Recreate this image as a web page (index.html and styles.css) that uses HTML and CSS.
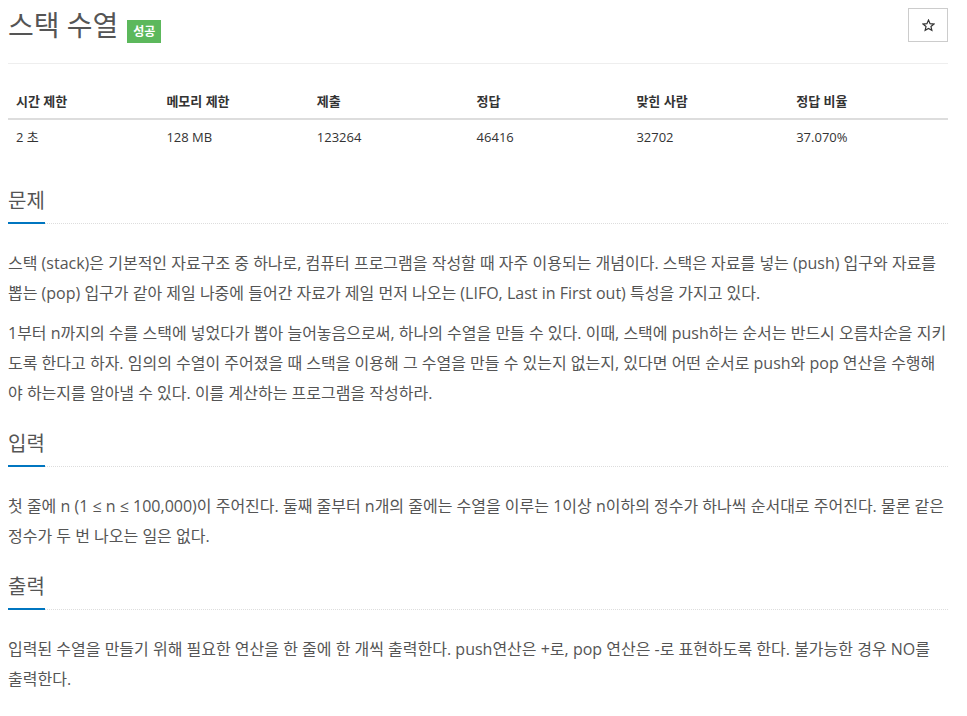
FILE: index.html
```html
<!DOCTYPE html>
<html lang="ko">
<head>
<meta charset="utf-8">
<title>스택 수열</title>
<link rel="stylesheet" href="styles.css">
</head>
<body>
<div class="page">

<div class="page-header">
  <h1 class="title">스택 수열</h1>
  <span class="label-ac">성공</span>
  <button class="star-btn" type="button">
    <svg class="star-icon" viewBox="0 0 24 24" width="13" height="13">
      <polygon points="12,2 14.9,8.6 22,9.3 16.6,14 18.2,21 12,17.3 5.8,21 7.4,14 2,9.3 9.1,8.6"/>
    </svg>
  </button>
</div>
<hr class="sep">

<table class="info">
  <thead>
    <tr>
      <th class="w16">시간 제한</th>
      <th class="w16">메모리 제한</th>
      <th class="w17">제출</th>
      <th class="w17">정답</th>
      <th class="w17">맞힌 사람</th>
      <th class="w17">정답 비율</th>
    </tr>
  </thead>
  <tbody>
    <tr>
      <td>2 초</td>
      <td>128 MB</td>
      <td>123264</td>
      <td>46416</td>
      <td>32702</td>
      <td>37.070%</td>
    </tr>
  </tbody>
</table>

<section class="problem-section">
  <div class="headline"><h2>문제</h2></div>
  <div class="problem-text">
    <p>스택 (stack)은 기본적인 자료구조 중 하나로, 컴퓨터 프로그램을 작성할 때 자주 이용되는 개념이다. 스택은 자료를 넣는 (push) 입구와 자료를 뽑는 (pop) 입구가 같아 제일 나중에 들어간 자료가 제일 먼저 나오는 (LIFO, Last in First out) 특성을 가지고 있다.</p>
    <p>1부터 n까지의 수를 스택에 넣었다가 뽑아 늘어놓음으로써, 하나의 수열을 만들 수 있다. 이때, 스택에 push하는 순서는 반드시 오름차순을 지키도록 한다고 하자. 임의의 수열이 주어졌을 때 스택을 이용해 그 수열을 만들 수 있는지 없는지, 있다면 어떤 순서로 push와 pop 연산을 수행해야 하는지를 알아낼 수 있다. 이를 계산하는 프로그램을 작성하라.</p>
  </div>
</section>

<section class="problem-section">
  <div class="headline"><h2>입력</h2></div>
  <div class="problem-text">
    <p>첫 줄에 n (1 ≤ n ≤ 100,000)이 주어진다. 둘째 줄부터 n개의 줄에는 수열을 이루는 1이상 n이하의 정수가 하나씩 순서대로 주어진다. 물론 같은 정수가 두 번 나오는 일은 없다.</p>
  </div>
</section>

<section class="problem-section">
  <div class="headline"><h2>출력</h2></div>
  <div class="problem-text">
    <p>입력된 수열을 만들기 위해 필요한 연산을 한 줄에 한 개씩 출력한다. push연산은 +로, pop 연산은 -로 표현하도록 한다. 불가능한 경우 NO를 출력한다.</p>
  </div>
</section>

</div>
</body>
</html>
```

FILE: styles.css
```css
body {
  margin: 0;
  background: #fff;
  color: #555;
  font-family: "Open Sans", "Noto Sans CJK KR", sans-serif;
  font-size: 14px;
}
.page {
  width: 940px;
  margin-left: 8px;
}

/* title row */
.page-header {
  display: flex;
  align-items: flex-start;
  padding-top: 8px;
}
.title {
  margin: 0;
  font-size: 28px;
  font-weight: normal;
  line-height: 34px;
  color: #555;
}
.label-ac {
  margin: 12px 0 0 9px;
  padding: 4px 6px;
  font-size: 12px;
  line-height: 15px;
  font-weight: bold;
  color: #fff;
  background: #5cb85c;
}
.star-btn {
  display: flex;
  align-items: center;
  justify-content: center;
  margin-left: auto;
  width: 40px;
  height: 34px;
  padding: 0;
  border: 1px solid #ccc;
  background: #fff;
}
.star-icon {
  fill: none;
  stroke: #333;
  stroke-width: 2.2;
  stroke-linejoin: miter;
}
.sep {
  margin: 20px 0 0;
  border: 0;
  border-top: 1px solid #eee;
}

/* info table */
.info {
  width: 100%;
  margin: 20px 0 34px;
  border-collapse: collapse;
  font-size: 13px;
  color: #333;
}
.info th, .info td {
  padding: 8px;
  line-height: 18px;
  text-align: left;
}
.info th {
  font-weight: bold;
  border-bottom: 2px solid #ddd;
}
.w16 { width: 16%; }
.w17 { width: 17%; }

/* sections */
.headline {
  margin: 23px 0 24px;
  border-bottom: 1px dotted #ddd;
}
.headline h2 {
  display: inline-block;
  margin: 0 0 -1px;
  padding-bottom: 8px;
  font-size: 20px;
  font-weight: normal;
  line-height: 26px;
  color: #555;
  border-bottom: 2px solid #0076c0;
}
.problem-text p {
  margin: 0 0 10px;
  font-size: 16px;
  line-height: 30px;
}
```
